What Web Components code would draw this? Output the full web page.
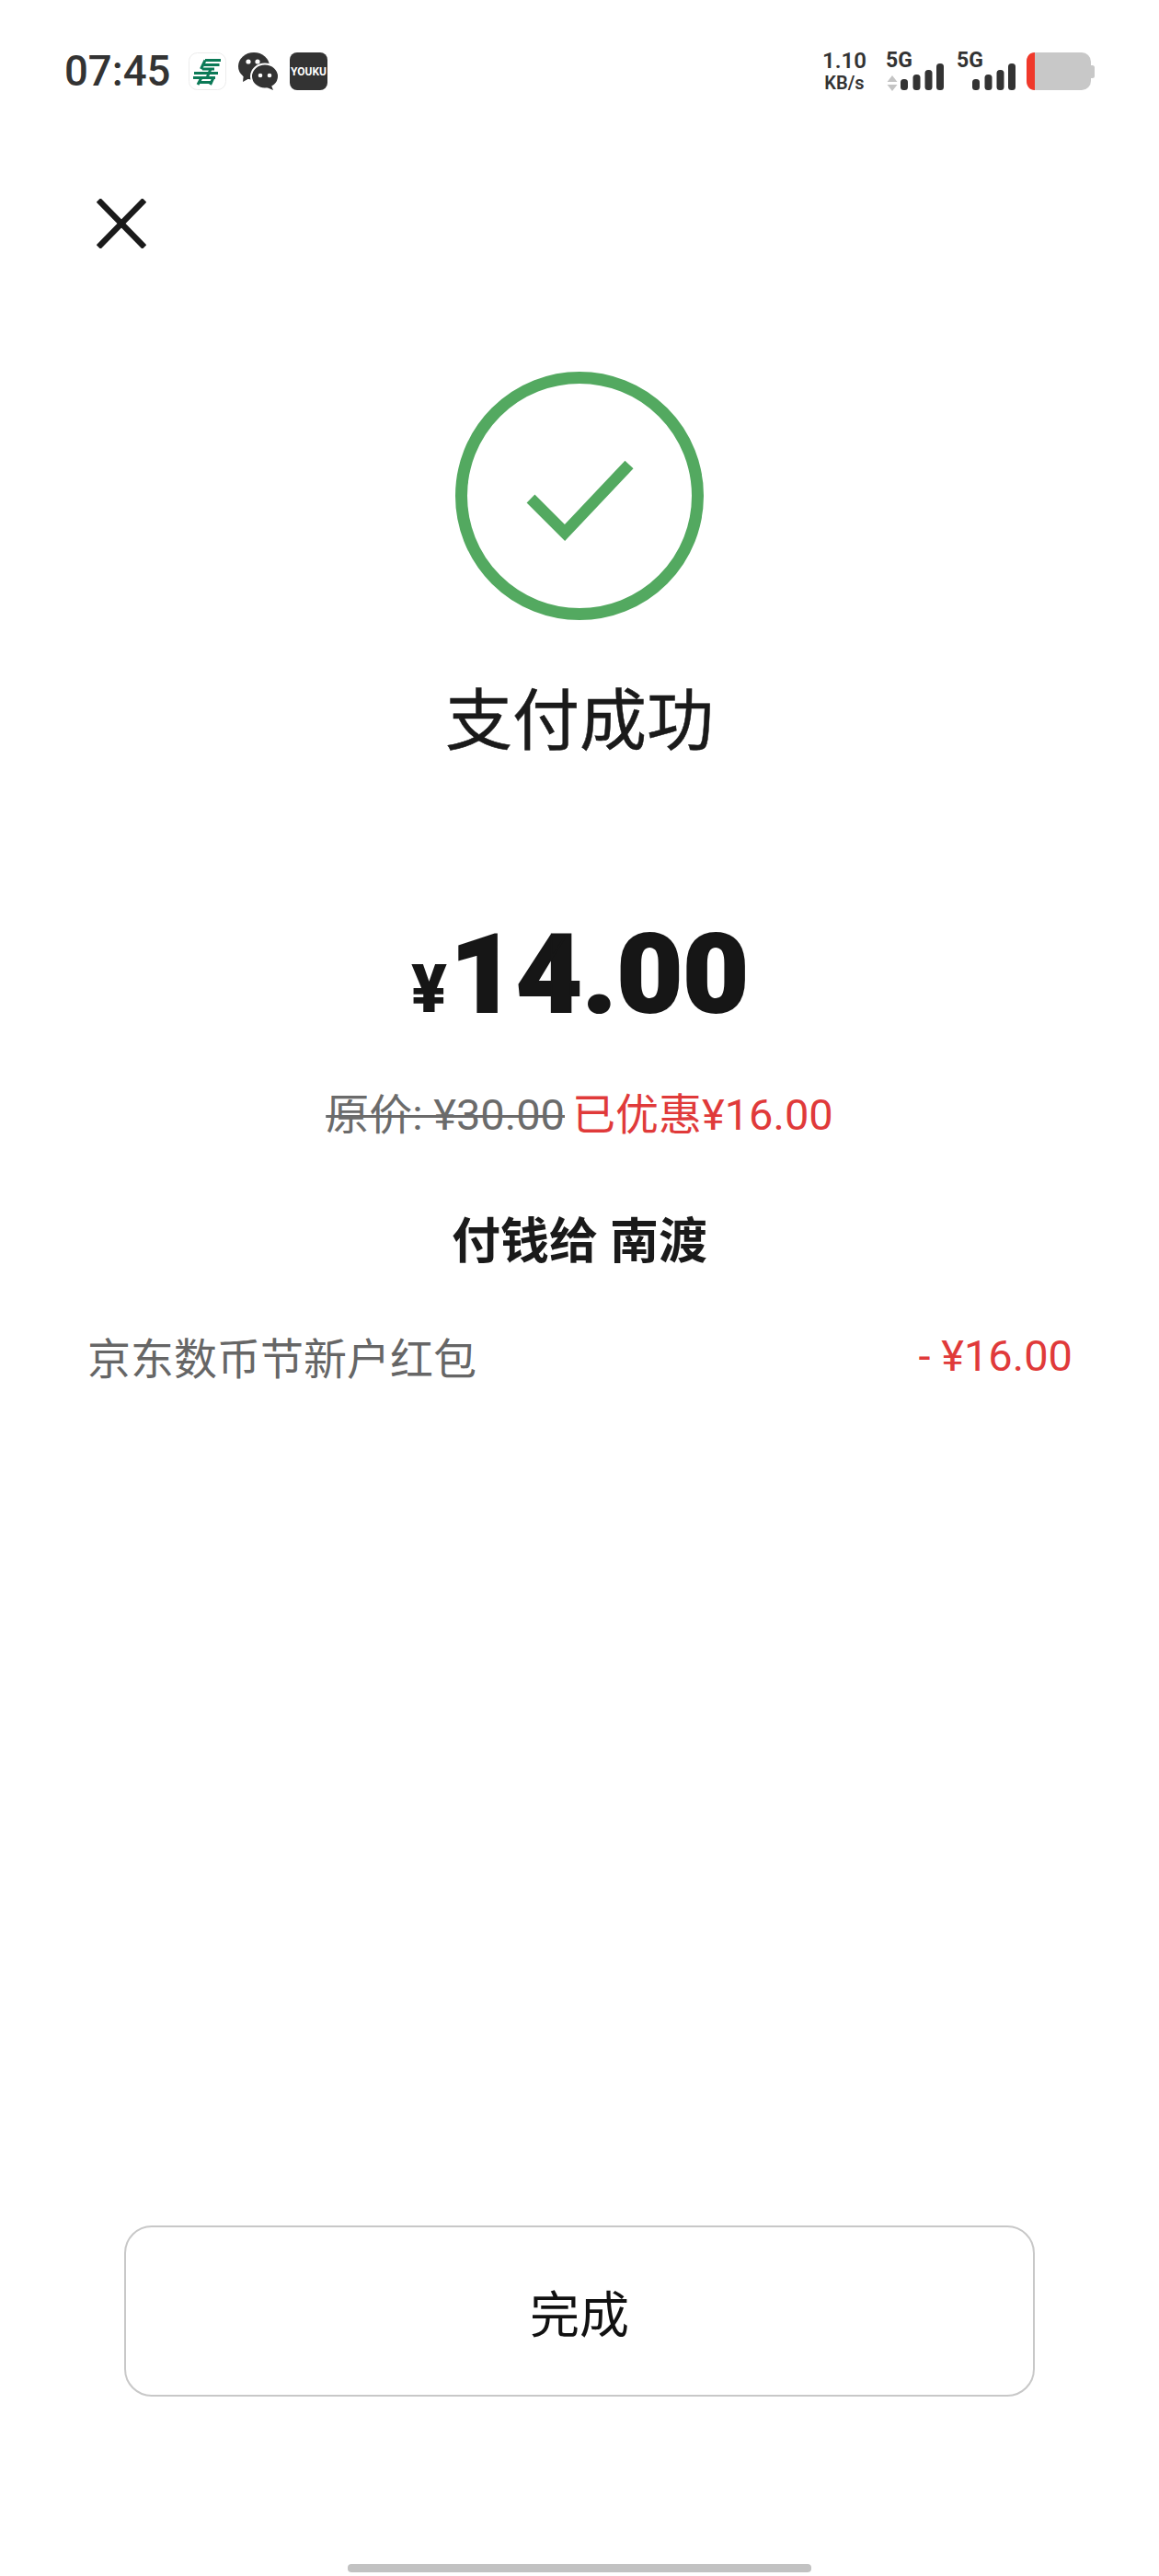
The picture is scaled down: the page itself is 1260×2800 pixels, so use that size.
<!DOCTYPE html>
<html lang="zh">
<head>
<meta charset="utf-8">
<title>支付成功</title>
<style>
  html, body { margin: 0; padding: 0; background: #fff; }
  body { font-family: Roboto, "Noto Sans CJK SC", sans-serif; }
</style>
</head>
<body>
<pay-result-page>
  <phone-status-bar slot="status"></phone-status-bar>
  <close-button slot="close"></close-button>
  <success-badge slot="badge">支付成功</success-badge>
  <price-summary slot="price" amount="14.00" original="¥30.00" saved="已优惠¥16.00"></price-summary>
  <payee-line slot="payee">付钱给 南渡</payee-line>
  <discount-row slot="discount" label="京东数币节新户红包" value="- ¥16.00"></discount-row>
  <done-button slot="action">完成</done-button>
</pay-result-page>

<script>
const FONT = 'Roboto, "Noto Sans CJK SC", sans-serif'

/**
 * Helper: one shadow root from a string of markup
 */
function shadow (el, html) {
  el.attachShadow({ mode: 'open' }).innerHTML = html
}

class PayResultPage extends HTMLElement {
  constructor () {
    super()
    shadow(this, `
      <style>
        :host { display: flex; flex-direction: column; width: 1260px; height: 2800px; background: #fff; overflow: hidden; }
        .spacer { flex: 1; }
        .home { align-self: center; width: 504px; height: 9px; margin-bottom: 4px; border-radius: 4px; background: #c2c2c2; }
      </style>
      <slot name="status"></slot>
      <slot name="close"></slot>
      <slot name="badge"></slot>
      <slot name="price"></slot>
      <slot name="payee"></slot>
      <slot name="discount"></slot>
      <div class="spacer"></div>
      <slot name="action"></slot>
      <div class="home"></div>
    `)
  }
}

class PhoneStatusBar extends HTMLElement {
  constructor () {
    super()
    // signal bars, drawn the same for both sims
    const bars = `
      <rect x="0" y="17" width="8" height="12" rx="3.5"/>
      <rect x="13.5" y="12" width="8" height="17" rx="3.5"/>
      <rect x="26.5" y="7" width="8" height="22" rx="3.5"/>
      <rect x="39" y="0" width="8" height="29" rx="3.5"/>`
    shadow(this, `
      <style>
        :host { display: flex; align-items: center; height: 41px; padding: 57px 70px 0 70px; color: #333; font-family: ${FONT}; }
        .time { font-size: 45.500px; font-weight: 500; line-height: 41px; margin-right: 20px; }
        .apps { display: flex; gap: 13px; align-items: center; }
        svg { display: block; }
        .spacer { flex: 1; }
        .speed { display: flex; flex-direction: column; align-items: center; width: 50px; margin-right: 20px; }
        .speed b { font-size: 24px; line-height: 22px; font-weight: 600; }
        .speed span { font-size: 20px; line-height: 20px; margin-top: 3px; font-weight: 600; }
        .sim { position: relative; height: 41px; }
        .sim .g { font-size: 23px; font-weight: 700; line-height: 18px; }
        .sim svg { position: absolute; bottom: 0; }
        .sim1 { width: 63px; margin-right: 14px; }
        .sim2 { width: 63px; margin-right: 13px; }
        .sim1 .sig { left: 16px; }
        .sim2 .sig { left: 17px; }
        .sim1 .arr { left: 1px; }
      </style>
      <div class="time">07:45</div>
      <div class="apps">
        <svg width="41" height="41" viewBox="0 0 41 41">
          <rect x=".5" y=".5" width="40" height="40" rx="9" fill="#fff" stroke="#ececec"/>
          <g fill="none" stroke="#0c7a57" stroke-width="3">
            <path d="M18 8.500H35"/>
            <path d="M16.500 13.500H33.500"/>
            <path d="M15 18H28"/>
            <path d="M6 22.500H32"/>
            <path d="M5 27.500H29"/>
            <path d="M11 32.500H26"/>
            <path d="M18 8.500L13.500 18M24 18L20 27.500M14 27.500L10 35M27 27.500L23.500 35"/>
          </g>
        </svg>
        <svg width="43" height="41" viewBox="0 0 43 41" fill="#333">
          <ellipse cx="17" cy="15" rx="17" ry="15"/>
          <path d="M6 23l-1 9 9-5z"/>
          <ellipse cx="29" cy="26" rx="15" ry="13.5" stroke="#fff" stroke-width="2"/>
          <path d="M36 36l2 5-7-3z"/>
          <circle cx="11" cy="10" r="2.6" fill="#fff"/>
          <circle cx="21" cy="10" r="2.6" fill="#fff"/>
          <circle cx="24" cy="25" r="2.3" fill="#fff"/>
          <circle cx="34" cy="25" r="2.3" fill="#fff"/>
        </svg>
        <svg width="41" height="41" viewBox="0 0 41 41">
          <rect width="41" height="41" rx="8" fill="#333"/>
          <text x="20.5" y="25" text-anchor="middle" font-family="Roboto, sans-serif" font-weight="700" font-size="12" fill="#fff">YOUKU</text>
        </svg>
      </div>
      <div class="spacer"></div>
      <div class="speed"><b>1.10</b><span>KB/s</span></div>
      <div class="sim sim1">
        <div class="g">5G</div>
        <svg class="arr" width="12" height="17" viewBox="0 0 12 17" fill="#c4c4c4" style="bottom:-1px">
          <path d="M6 0l5.500 7H.500zM6 17L.500 10h11z"/>
        </svg>
        <svg class="sig" width="47" height="29" viewBox="0 0 47 29" fill="#333">${bars}</svg>
      </div>
      <div class="sim sim2">
        <div class="g">5G</div>
        <svg class="sig" width="47" height="29" viewBox="0 0 47 29" fill="#333">${bars}</svg>
      </div>
      <svg width="74" height="41" viewBox="0 0 74 41">
        <rect x="68" y="14" width="6" height="14" rx="2.500" fill="#c8c8c8"/>
        <rect x="0" y="0" width="70" height="41" rx="10" fill="#c8c8c8"/>
        <path d="M9 0H10v0H9C3.500 0 0 4 0 10v21c0 6 3.500 10 9 10z" fill="#f0392b"/>
      </svg>
    `)
  }
}

class CloseButton extends HTMLElement {
  constructor () {
    super()
    shadow(this, `
      <style>
        :host { display: block; width: 54px; height: 54px; margin: 118px 0 0 105px; }
        svg { display: block; }
      </style>
      <svg width="54" height="54" viewBox="0 0 54 54" fill="none" stroke="#1a1a1a" stroke-width="6.500">
        <path d="M2 1.500L52 52.500M52 1.500L2 52.500"/>
      </svg>
    `)
  }
}

class SuccessBadge extends HTMLElement {
  constructor () {
    super()
    shadow(this, `
      <style>
        :host { display: flex; flex-direction: column; align-items: center; margin-top: 134px; font-family: ${FONT}; }
        svg { display: block; }
        .title { margin-top: 60px; font-size: 73px; line-height: 100px; color: #1a1a1a; -webkit-text-stroke: .5px #1a1a1a; }
      </style>
      <svg width="270" height="270" viewBox="0 0 270 270" fill="none" stroke="#53a960">
        <circle cx="135" cy="135" r="128.500" stroke-width="13"/>
        <path d="M82 138l37 37 70-74" stroke-width="12.500"/>
      </svg>
      <div class="title"><slot></slot></div>
    `)
  }
}

class PriceSummary extends HTMLElement {
  constructor () {
    super()
    shadow(this, `
      <style>
        :host { display: flex; flex-direction: column; align-items: center; margin-top: 161px; font-family: ${FONT}; }
        .amount { display: flex; align-items: baseline; height: 130px; margin-left: -7px; color: #161616; font-family: Roboto, sans-serif; font-weight: 900; }
        .yen { font-size: 72px; line-height: 130px; margin-right: 11px; }
        .num { display: inline-block; font-size: 118px; line-height: 130px; -webkit-text-stroke: 2px #161616; transform: scaleX(1.05); }
        .line { display: flex; gap: 8px; margin-top: 57px; font-size: 47px; line-height: 60px; white-space: nowrap; }
        .old { color: #6b6b6b; text-decoration: line-through; text-decoration-thickness: 3px; }
        .saved { color: #e03a3a; }
      </style>
      <div class="amount"><span class="yen">¥</span><span class="num">${this.getAttribute('amount')}</span></div>
      <div class="line">
        <span class="old">原价: ${this.getAttribute('original')}</span>
        <span class="saved">${this.getAttribute('saved')}</span>
      </div>
    `)
  }
}

class PayeeLine extends HTMLElement {
  constructor () {
    super()
    shadow(this, `
      <style>
        :host { display: block; margin-top: 73px; text-align: center; font-family: ${FONT}; font-size: 53px; line-height: 70px; font-weight: 700; color: #1a1a1a; }
      </style>
      <slot></slot>
    `)
  }
}

class DiscountRow extends HTMLElement {
  constructor () {
    super()
    shadow(this, `
      <style>
        :host { display: flex; justify-content: space-between; align-items: center; margin-top: 60px; padding: 0 94px 0 95px; font-family: ${FONT}; font-size: 47px; line-height: 66px; }
        .label { color: #666; }
        .value { color: #e03a3a; margin-top: -8px; }
      </style>
      <span class="label">${this.getAttribute('label')}</span>
      <span class="value">${this.getAttribute('value')}</span>
    `)
  }
}

class DoneButton extends HTMLElement {
  constructor () {
    super()
    shadow(this, `
      <style>
        :host { display: flex; align-items: center; justify-content: center; box-sizing: border-box; width: 990px; height: 186px; margin: 0 auto 182px; border: 2px solid #c8c8c8; border-radius: 30px; font-family: ${FONT}; font-size: 54px; color: #111; background: #fff; }
      </style>
      <slot></slot>
    `)
  }
}

customElements.define('pay-result-page', PayResultPage)
customElements.define('phone-status-bar', PhoneStatusBar)
customElements.define('close-button', CloseButton)
customElements.define('success-badge', SuccessBadge)
customElements.define('price-summary', PriceSummary)
customElements.define('payee-line', PayeeLine)
customElements.define('discount-row', DiscountRow)
customElements.define('done-button', DoneButton)
</script>
</body>
</html>
